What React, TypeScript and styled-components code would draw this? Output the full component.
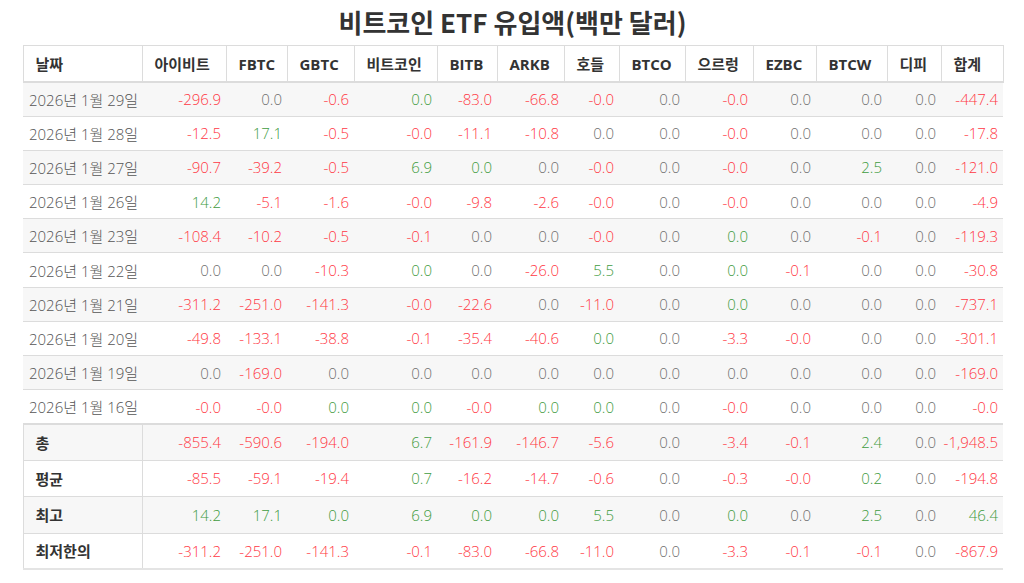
import styled, { createGlobalStyle } from 'styled-components';

const GlobalStyle = createGlobalStyle`
    html, body {
        margin: 0;
        padding: 0;
        background: #fff;
    }
    body {
        font-family: "Open Sans", "Noto Sans CJK KR", sans-serif;
        color: #333;
    }
`;

const columns = [
    { name: '날짜', width: 119 },
    { name: '아이비트', width: 84 },
    { name: 'FBTC', width: 61 },
    { name: 'GBTC', width: 67 },
    { name: '비트코인', width: 83 },
    { name: 'BITB', width: 60 },
    { name: 'ARKB', width: 67 },
    { name: '호들', width: 55 },
    { name: 'BTCO', width: 66 },
    { name: '으르렁', width: 68 },
    { name: 'EZBC', width: 63 },
    { name: 'BTCW', width: 71 },
    { name: '디피', width: 54 },
    { name: '합계', width: 62 },
];

// '+0.0' = zero shown in green
const days = [
    { date: '2026년 1월 29일', values: ['-296.9', '0.0', '-0.6', '+0.0', '-83.0', '-66.8', '-0.0', '0.0', '-0.0', '0.0', '0.0', '0.0', '-447.4'] },
    { date: '2026년 1월 28일', values: ['-12.5', '17.1', '-0.5', '-0.0', '-11.1', '-10.8', '0.0', '0.0', '-0.0', '0.0', '0.0', '0.0', '-17.8'] },
    { date: '2026년 1월 27일', values: ['-90.7', '-39.2', '-0.5', '6.9', '+0.0', '0.0', '-0.0', '0.0', '-0.0', '0.0', '2.5', '0.0', '-121.0'] },
    { date: '2026년 1월 26일', values: ['14.2', '-5.1', '-1.6', '-0.0', '-9.8', '-2.6', '-0.0', '0.0', '-0.0', '0.0', '0.0', '0.0', '-4.9'] },
    { date: '2026년 1월 23일', values: ['-108.4', '-10.2', '-0.5', '-0.1', '0.0', '0.0', '-0.0', '0.0', '+0.0', '0.0', '-0.1', '0.0', '-119.3'] },
    { date: '2026년 1월 22일', values: ['0.0', '0.0', '-10.3', '+0.0', '0.0', '-26.0', '5.5', '0.0', '+0.0', '-0.1', '0.0', '0.0', '-30.8'] },
    { date: '2026년 1월 21일', values: ['-311.2', '-251.0', '-141.3', '-0.0', '-22.6', '0.0', '-11.0', '0.0', '+0.0', '0.0', '0.0', '0.0', '-737.1'] },
    { date: '2026년 1월 20일', values: ['-49.8', '-133.1', '-38.8', '-0.1', '-35.4', '-40.6', '+0.0', '0.0', '-3.3', '-0.0', '0.0', '0.0', '-301.1'] },
    { date: '2026년 1월 19일', values: ['0.0', '-169.0', '0.0', '0.0', '0.0', '0.0', '0.0', '0.0', '0.0', '0.0', '0.0', '0.0', '-169.0'] },
    { date: '2026년 1월 16일', values: ['-0.0', '-0.0', '+0.0', '+0.0', '-0.0', '+0.0', '+0.0', '0.0', '-0.0', '0.0', '0.0', '0.0', '-0.0'] },
];

const summary = [
    { label: '총', values: ['-855.4', '-590.6', '-194.0', '6.7', '-161.9', '-146.7', '-5.6', '0.0', '-3.4', '-0.1', '2.4', '0.0', '-1,948.5'] },
    { label: '평균', values: ['-85.5', '-59.1', '-19.4', '0.7', '-16.2', '-14.7', '-0.6', '0.0', '-0.3', '-0.0', '0.2', '0.0', '-194.8'] },
    { label: '최고', values: ['14.2', '17.1', '+0.0', '6.9', '+0.0', '+0.0', '5.5', '0.0', '+0.0', '0.0', '2.5', '0.0', '46.4'] },
    { label: '최저한의', values: ['-311.2', '-251.0', '-141.3', '-0.1', '-83.0', '-66.8', '-11.0', '0.0', '-3.3', '-0.1', '-0.1', '0.0', '-867.9'] },
];

type Tone = 'up' | 'down' | 'flat';

const toneOf = (v: string): Tone => {
    if (v.startsWith('-')) return 'down';
    if (v.startsWith('+')) return 'up';
    return parseFloat(v) > 0 ? 'up' : 'flat';
};

const toneColor = { up: '#3f9c3f', down: '#ff3844', flat: '#6f6f6f' };

const App = () => {
    return (
        <>
            <GlobalStyle />
            <Page>
                <Title>비트코인 ETF 유입액(백만 달러)</Title>
                <Table>
                    <colgroup>
                        {columns.map((c) => (
                            <col key={c.name} style={{ width: c.width }} />
                        ))}
                    </colgroup>
                    <thead>
                        <tr>
                            {columns.map((c) => (
                                <HeadCell key={c.name}>{c.name}</HeadCell>
                            ))}
                        </tr>
                    </thead>
                    <tbody>
                        {days.map((d, i) => (
                            <DataRow key={d.date} $striped={i % 2 === 0}>
                                <DateCell>{d.date}</DateCell>
                                {d.values.map((v, j) => (
                                    <NumCell key={j} $tone={toneOf(v)}>{v.replace('+', '')}</NumCell>
                                ))}
                            </DataRow>
                        ))}
                    </tbody>
                    <tfoot>
                        {summary.map((s, i) => (
                            <SummaryRow key={s.label} $striped={i % 2 === 0} $first={i === 0}>
                                <LabelCell>{s.label}</LabelCell>
                                {s.values.map((v, j) => (
                                    <NumCell key={j} $tone={toneOf(v)}>{v.replace('+', '')}</NumCell>
                                ))}
                            </SummaryRow>
                        ))}
                    </tfoot>
                </Table>
            </Page>
        </>
    );
};

const Page = styled.main`
    width: 980px;
    margin: 0 auto;
    padding: 4px 0 0 1px;
`;

const Title = styled.h1`
    margin: 0 0 6px;
    height: 35px;
    text-align: center;
    font-family: "Noto Sans CJK KR", "Open Sans", sans-serif;
    font-size: 26px;
    font-weight: 700;
    line-height: 35px;
    color: #333;
`;

const Table = styled.table`
    width: 980px;
    table-layout: fixed;
    border-collapse: collapse;
    font-size: 15px;
`;

const HeadCell = styled.th`
    height: 35px;
    padding: 0 12px;
    border: 1px solid #dcdcdc;
    border-bottom-width: 2px;
    text-align: left;
    font-family: "Open Sans", "Noto Sans CJK KR", sans-serif;
    font-size: 15px;
    font-weight: 700;
    color: #333;
    white-space: nowrap;
`;

const DataRow = styled.tr<{ $striped: boolean }>`
    height: 34.2px;
    background: ${({ $striped }) => ($striped ? '#f7f7f7' : '#fff')};
    border-top: 1px solid #dcdcdc;
`;

const SummaryRow = styled.tr<{ $striped: boolean; $first: boolean }>`
    height: 36.4px;
    background: ${({ $striped }) => ($striped ? '#f7f7f7' : '#fff')};
    border-top: ${({ $first }) => ($first ? '2px' : '1px')} solid #dcdcdc;
    border-left: 1px solid #dcdcdc;

    &:last-child {
        border-bottom: 2px solid #e4e4e4;
    }
`;

const DateCell = styled.td`
    padding: 0 6px;
    text-align: right;
    font-weight: 300;
    color: #555;
    white-space: nowrap;
`;

const LabelCell = styled.td`
    padding: 0 12px;
    border-right: 1px solid #dcdcdc;
    text-align: left;
    font-weight: 700;
    color: #333;
`;

const NumCell = styled.td<{ $tone: Tone }>`
    padding: 0 5px 0 0;
    text-align: right;
    font-weight: 300;
    color: ${({ $tone }) => toneColor[$tone]};
    white-space: nowrap;
`;

export default App;
